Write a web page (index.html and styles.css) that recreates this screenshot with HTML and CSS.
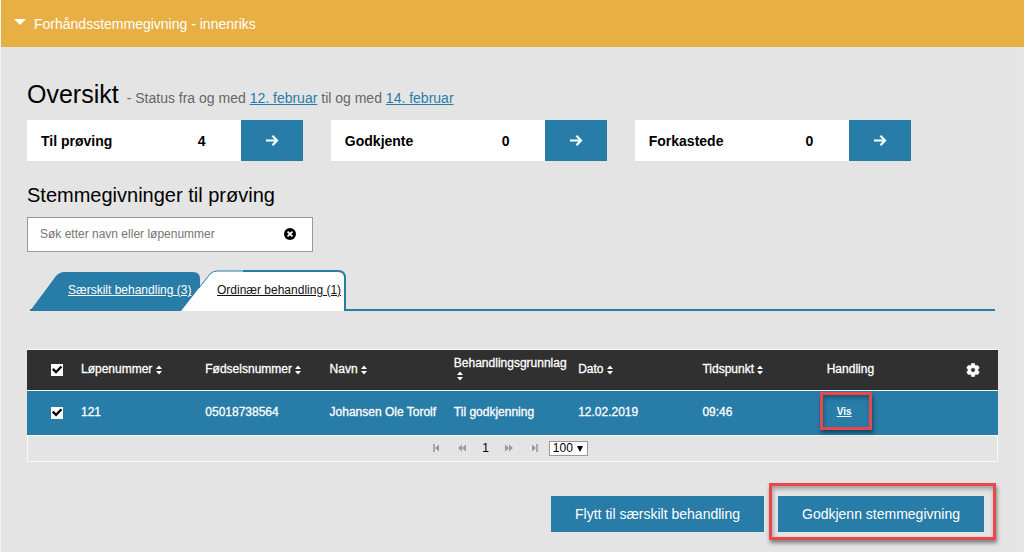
FILE: index.html
```html
<!DOCTYPE html>
<html lang="no">
<head>
<meta charset="utf-8">
<meta name="viewport" content="width=device-width, initial-scale=1">
<title>Forhåndsstemmegivning - innenriks</title>
<link rel="stylesheet" href="styles.css">
</head>
<body>
<svg class="symbols" aria-hidden="true">
  <symbol id="arrow" viewBox="0 0 14 14"><path d="M1 6.5H12M7.4 1.8L12 6.5L7.4 11.2" fill="none" stroke="currentColor" stroke-width="2.2"/></symbol>
  <symbol id="sort" viewBox="0 0 8 10"><path d="M1 4L4 0.5L7 4ZM1 6L4 9.5L7 6Z" fill="currentColor"/></symbol>
</svg>
<div class="panel">
  <header class="panel-header">
    <button class="panel-toggle" type="button"><span class="caret"></span>Forhåndsstemmegivning - innenriks</button>
  </header>
  <main class="panel-body">
    <div class="overview">
      <h1>Oversikt</h1>
      <p>- Status fra og med <a href="#">12. februar</a> til og med <a href="#">14. februar</a></p>
    </div>
    <div class="cards">
      <section class="card"><span class="card-name">Til prøving</span><span class="card-count">4</span><button class="card-go" type="button" aria-label="Vis til prøving"><svg><use href="#arrow"/></svg></button></section>
      <section class="card"><span class="card-name">Godkjente</span><span class="card-count">0</span><button class="card-go" type="button" aria-label="Vis godkjente"><svg><use href="#arrow"/></svg></button></section>
      <section class="card"><span class="card-name">Forkastede</span><span class="card-count">0</span><button class="card-go" type="button" aria-label="Vis forkastede"><svg><use href="#arrow"/></svg></button></section>
    </div>
    <h2>Stemmegivninger til prøving</h2>
    <div class="search">
      <input type="text" placeholder="Søk etter navn eller løpenummer" aria-label="Søk etter navn eller løpenummer">
      <button type="button" class="clear" aria-label="Tøm søk"><svg viewBox="0 0 12 12"><circle cx="6" cy="6" r="6"/><path d="M3.6 3.6L8.4 8.4M8.4 3.6L3.6 8.4" stroke="#fff" stroke-width="1.8"/></svg></button>
    </div>
    <nav class="tabs">
      <a class="tab tab-first" href="#"><svg class="tab-shape" viewBox="0 0 172 41"><path d="M0 41L26 6Q30 2 34 2H163Q170 2 170 9V41Z" fill="#287ca8"/></svg><span>Særskilt behandling (3)</span></a>
      <a class="tab tab-active" href="#" aria-current="page"><svg class="tab-shape" viewBox="0 0 165 41"><path d="M0 41L29 4Q32 1 36 1H157Q164 1 164 8V41Z" fill="#fff"/><path d="M18 18L29 4Q32 1 36 1H62" fill="none" stroke="#287ca8"/><path d="M62 1H157Q164 1 164 8V41" fill="none" stroke="#287ca8" stroke-width="2"/></svg><span>Ordinær behandling (1)</span></a>
    </nav>
    <div class="grid-frame">
      <table>
        <colgroup><col class="col-check"><col><col><col><col><col><col><col><col class="col-settings"></colgroup>
        <thead>
          <tr>
            <th class="check"><input type="checkbox" checked aria-label="Velg alle"></th>
            <th>Løpenummer <svg class="sort"><use href="#sort"/></svg></th>
            <th>Fødselsnummer <svg class="sort"><use href="#sort"/></svg></th>
            <th>Navn <svg class="sort"><use href="#sort"/></svg></th>
            <th>Behandlingsgrunnlag <svg class="sort sort-below"><use href="#sort"/></svg></th>
            <th>Dato <svg class="sort"><use href="#sort"/></svg></th>
            <th>Tidspunkt <svg class="sort"><use href="#sort"/></svg></th>
            <th>Handling</th>
            <th class="settings"><button type="button" aria-label="Innstillinger"><svg viewBox="0 0 14 14"><path fill-rule="evenodd" d="M5.5 0.5H8.5L8.9 2.3L10 2.9L11.8 2.4L13.3 5L12 6.3V7.7L13.3 9L11.8 11.6L10 11.1L8.9 11.7L8.5 13.5H5.5L5.1 11.7L4 11.1L2.2 11.6L0.7 9L2 7.7V6.3L0.7 5L2.2 2.4L4 2.9L5.1 2.3ZM7 4.7A2.3 2.3 0 1 0 7 9.3A2.3 2.3 0 1 0 7 4.7Z" fill="#fff" stroke="#fff" stroke-width=".6" stroke-linejoin="round"/></svg></button></th>
          </tr>
        </thead>
        <tbody>
          <tr>
            <td class="check"><input type="checkbox" checked aria-label="Velg 121"></td>
            <td>121</td>
            <td>05018738564</td>
            <td>Johansen Ole Torolf</td>
            <td>Til godkjenning</td>
            <td>12.02.2019</td>
            <td>09:46</td>
            <td><span class="view marked"><a href="#">Vis</a></span></td>
            <td></td>
          </tr>
        </tbody>
      </table>
      <div class="pager">
        <button type="button" aria-label="Første side"><svg viewBox="0 0 10 10"><path d="M2 1V9" stroke="currentColor" stroke-width="1.6"/><path d="M7 1.5V8.5L3 5Z" fill="currentColor"/></svg></button>
        <button type="button" aria-label="Forrige side"><svg viewBox="0 0 10 10"><path d="M5 1.5V8.5L1 5ZM9 1.5V8.5L5 5Z" fill="currentColor"/></svg></button>
        <span>1</span>
        <button type="button" aria-label="Neste side"><svg viewBox="0 0 10 10"><path d="M1 1.5V8.5L5 5ZM5 1.5V8.5L9 5Z" fill="currentColor"/></svg></button>
        <button type="button" aria-label="Siste side"><svg viewBox="0 0 10 10"><path d="M8 1V9" stroke="currentColor" stroke-width="1.6"/><path d="M3 1.5V8.5L7 5Z" fill="currentColor"/></svg></button>
        <div class="page-size"><select aria-label="Rader per side"><option>100</option></select></div>
      </div>
    </div>
    <div class="actions">
      <button class="action" type="button">Flytt til særskilt behandling</button>
      <span class="approve marked"><button class="action" type="button">Godkjenn stemmegivning</button></span>
    </div>
  </main>
</div>
</body>
</html>
```
FILE: styles.css
```css
* { box-sizing: border-box; }
body {
  margin: 0;
  background: #e4e4e4;
  color: #000;
  font: 12px/16px "Liberation Sans", Arial, sans-serif;
}
button { border: 0; padding: 0; font: inherit; background: none; cursor: pointer; }
svg { display: block; }
a { color: #287ca8; }
.symbols { position: absolute; width: 0; height: 0; }

.panel { border-left: 1px solid #f4f4f4; }
.panel-header { padding: 0 13px; background: #e8af44; }
.panel-toggle {
  display: flex;
  align-items: center;
  gap: 7px;
  height: 47px;
  padding-top: 1px;
  color: #fff;
  font-size: 14px;
}
.caret {
  margin: 0 1px 5px 0;
  border: 6px solid transparent;
  border-top: 6px solid #fff;
  border-bottom: 0;
}
.panel-body {
  margin-right: 5px;
  padding: 31px 20px 13px 26px;
  border-right: 1px solid #e9e9e9;
}

.overview { display: flex; align-items: baseline; gap: 8px; }
.overview h1 { margin: 0; font-size: 25px; font-weight: 400; line-height: 32px; }
.overview p { margin: 0; color: #666; font-size: 14px; }

.cards {
  display: grid;
  grid-template-columns: repeat(3, 1fr);
  gap: 28px;
  width: 91%;
  margin-top: 10px;
}
.card { display: flex; align-items: center; height: 41px; background: #fff; font-size: 14px; font-weight: 700; }
.card-name { flex: 1; padding-left: 14px; }
.card-count { width: 43px; }
.card-go { display: flex; align-items: center; justify-content: center; width: 62px; height: 100%; background: #287ca8; color: #fff; }
.card-go svg { width: 14px; height: 14px; }

h2 { margin: 22px 0 10px; font-size: 20px; font-weight: 400; line-height: 24px; }
.search { display: flex; align-items: center; width: 286px; height: 35px; border: 1px solid #999; background: #fff; }
.search input { flex: 1; min-width: 0; padding: 0 12px 2px; border: 0; outline: 0; background: none; font: inherit; }
.search input::placeholder { color: #757575; opacity: 1; }
.clear { margin: 0 16px 2px 0; }
.clear svg { width: 12px; height: 12px; }

.tabs { display: flex; margin: 18px 3px 0; border-bottom: 2px solid #287ca8; }
.tab { position: relative; height: 41px; margin-bottom: -2px; line-height: 40px; white-space: nowrap; }
.tab-shape { position: absolute; top: 0; left: 0; width: 100%; height: 41px; }
.tab span { position: relative; }
.tab-first { width: 172px; padding-left: 38px; color: #fff; }
.tab-active { width: 165px; margin-left: -21px; padding-left: 36px; color: #111; }

.grid-frame { margin-top: 38px; border: 1px solid #f8f8f8; border-width: 1px 0; }
table { width: 100%; border-collapse: collapse; table-layout: fixed; color: #fff; }
.col-check { width: 50px; }
.col-settings { width: 51px; }
th, td { padding: 0 4px 2px; text-align: left; font-weight: 400; -webkit-text-stroke: 0.3px currentColor; }
thead tr { height: 40px; background: #303030; border-bottom: 1px solid #f8f8f8; }
tbody tr { height: 45px; background: #287ca8; border-bottom: 1px solid #f8f8f8; }
.check input {
  display: block;
  appearance: none;
  width: 12px;
  height: 12px;
  margin: 2px 0 0 20px;
  background: #fff;
}
.check input:checked::before {
  content: "";
  display: block;
  width: 12px;
  height: 12px;
  background: #000;
  clip-path: polygon(8% 50%, 22% 36%, 42% 56%, 80% 16%, 94% 30%, 42% 84%);
}
.sort { display: inline-block; width: 8px; height: 10px; margin-left: -1px; vertical-align: -2px; }
.sort-below { display: block; margin-left: 2px; margin-bottom: 2px; }
.settings button { display: block; margin: 2px auto 0; }
.settings svg { width: 14px; height: 14px; }
.view a { color: #fff; font-size: 10px; font-weight: 700; -webkit-text-stroke: 0; }

.marked { position: relative; }
.marked::after {
  content: "";
  position: absolute;
  border: 3px solid #e8484b;
  box-shadow: 1px 3px 4px rgba(0, 0, 0, 0.45), inset 1px 3px 4px rgba(0, 0, 0, 0.3);
  pointer-events: none;
}
.view { margin-left: 10px; }
.view::after { inset: -12px -20px -12px -17px; }
.approve::after { inset: -13px -12px -8px -9px; }

.pager {
  display: flex;
  align-items: center;
  justify-content: center;
  gap: 15px;
  height: 25px;
  padding-right: 5px;
  border: 1px solid #f8f8f8;
  border-width: 0 1px;
}
.pager button { color: #999; }
.pager button svg { width: 10px; height: 10px; }
.page-size { position: relative; margin-left: -5px; }
.page-size select { display: block; appearance: none; width: 39px; height: 15px; padding: 0 3px; border: 1px solid #999; border-radius: 0; background: #fff; color: #000; font: inherit; line-height: 13px; }
.page-size::after {
  content: "";
  position: absolute;
  top: 5px;
  right: 5px;
  border: 3px solid transparent;
  border-top: 6px solid #000;
  border-bottom: 0;
  pointer-events: none;
}

.actions { display: flex; justify-content: flex-end; gap: 14px; margin: 34px 14px 8px 0; }
.action { height: 36px; padding: 0 24px; background: #287ca8; color: #fff; font-size: 14px; white-space: nowrap; }
```
